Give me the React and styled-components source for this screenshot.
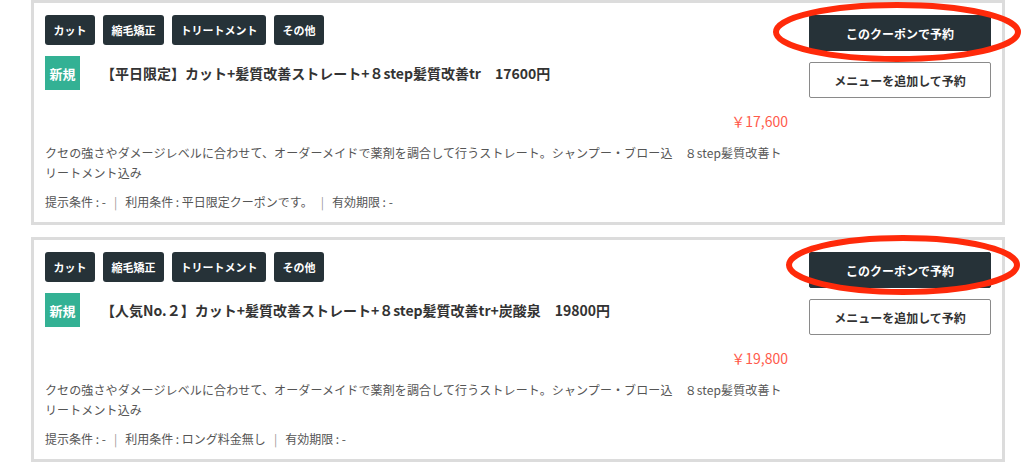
import React from 'react';
import styled, { createGlobalStyle } from 'styled-components';

const GlobalStyle = createGlobalStyle`
  html, body {
    margin: 0;
    padding: 0;
    background: #fff;
    overflow: hidden;
  }
  body {
    font-family: "Noto Sans CJK JP", "Noto Sans", "Liberation Sans", sans-serif;
    color: #333;
  }
`

const Page = styled.div`
  width: 1024px;
  padding-left: 31px;
  box-sizing: border-box;
`

const Card = styled.div`
  position: relative;
  width: 974px;
  box-sizing: border-box;
  border: 3px solid #dcdcdc;
  background: #fff;
  padding: 12px 11px 10px 11px;
  display: flex;
  gap: 19px;

  & + & {
    margin-top: 12px;
  }
`

const Main = styled.div`
  width: 745px;
  display: flex;
  flex-direction: column;
`

const Tags = styled.div`
  display: flex;
  gap: 8px;
  height: 30px;
`

const Tag = styled.span`
  display: flex;
  align-items: center;
  justify-content: center;
  padding: 0 8.5px;
  background: #263238;
  color: #fff;
  font-size: 11px;
  font-weight: bold;
  border-radius: 3px;
`

const TitleRow = styled.div`
  margin-top: 11px;
  height: 34px;
  display: flex;
  align-items: center;
`

const NewBadge = styled.span`
  width: 35px;
  height: 34px;
  display: flex;
  align-items: center;
  justify-content: center;
  background: #33b194;
  color: #fff;
  font-size: 13px;
  font-weight: bold;
`

const Title = styled.h2`
  margin: 0 0 0 21px;
  font-size: 14px;
  font-weight: bold;
  color: #333;
`

const Price = styled.div`
  margin-top: 21px;
  line-height: 20px;
  text-align: right;
  padding-right: 2px;
  font-size: 14px;
  color: #ff5a4b;
`

const Desc = styled.p`
  margin: 12px 0 0;
  font-size: 12px;
  line-height: 20px;
  letter-spacing: 0.01em;
  color: #555;
`

const Conditions = styled.div`
  margin-top: 9px;
  line-height: 20px;
  font-size: 12px;
  color: #555;
  display: flex;
`

const Sep = styled.span`
  margin: 0 8px;
  color: #999;
`

const Side = styled.div`
  width: 182px;
  display: flex;
  flex-direction: column;
  gap: 11px;
`

const Button = styled.button`
  height: 36px;
  box-sizing: border-box;
  border-radius: 2px;
  font-family: inherit;
  font-size: 12px;
  font-weight: bold;
  cursor: pointer;
  background: ${p => (p.$primary ? '#263238' : '#fff')};
  color: ${p => (p.$primary ? '#fff' : '#333')};
  border: 1px solid ${p => (p.$primary ? '#263238' : '#8a8a8a')};
`

const Mark = styled.svg`
  position: absolute;
  top: -3px;
  left: 735px;
  overflow: visible;
  pointer-events: none;
`

const coupons = [
  {
    title: '【平日限定】カット+髪質改善ストレート+８step髪質改善tr　17600円',
    price: '￥17,600',
    use: '平日限定クーポンです。',
    mark: { cx: 128, cy: 32, rx: 121, ry: 27 },
  },
  {
    title: '【人気No.２】カット+髪質改善ストレート+８step髪質改善tr+炭酸泉　19800円',
    price: '￥19,800',
    use: 'ロング料金無し',
    mark: { cx: 134, cy: 28, rx: 114, ry: 27 },
  },
];

const tags = ['カット', '縮毛矯正', 'トリートメント', 'その他'];

const CouponCard = ({ coupon }) => (
  <Card>
    <Main>
      <Tags>
        {tags.map(t => <Tag key={t}>{t}</Tag>)}
      </Tags>
      <TitleRow>
        <NewBadge>新規</NewBadge>
        <Title>{coupon.title}</Title>
      </TitleRow>
      <Price>{coupon.price}</Price>
      <Desc>
        クセの強さやダメージレベルに合わせて、オーダーメイドで薬剤を調合して行うストレート。シャンプー・ブロー込　８step髪質改善トリートメント込み
      </Desc>
      <Conditions>
        <span>提示条件 : -</span>
        <Sep>|</Sep>
        <span>利用条件 : {coupon.use}</span>
        <Sep>|</Sep>
        <span>有効期限 : -</span>
      </Conditions>
    </Main>
    <Side>
      <Button $primary>このクーポンで予約</Button>
      <Button>メニューを追加して予約</Button>
    </Side>
    <Mark width="260" height="70" viewBox="0 0 260 70">
      <ellipse
        cx={coupon.mark.cx}
        cy={coupon.mark.cy}
        rx={coupon.mark.rx}
        ry={coupon.mark.ry}
        fill="none"
        stroke="#ff2a0a"
        strokeWidth="6"
      />
    </Mark>
  </Card>
);

export default function App() {
  return (
    <>
      <GlobalStyle />
      <Page>
        {coupons.map(c => <CouponCard key={c.price} coupon={c} />)}
      </Page>
    </>
  );
}
